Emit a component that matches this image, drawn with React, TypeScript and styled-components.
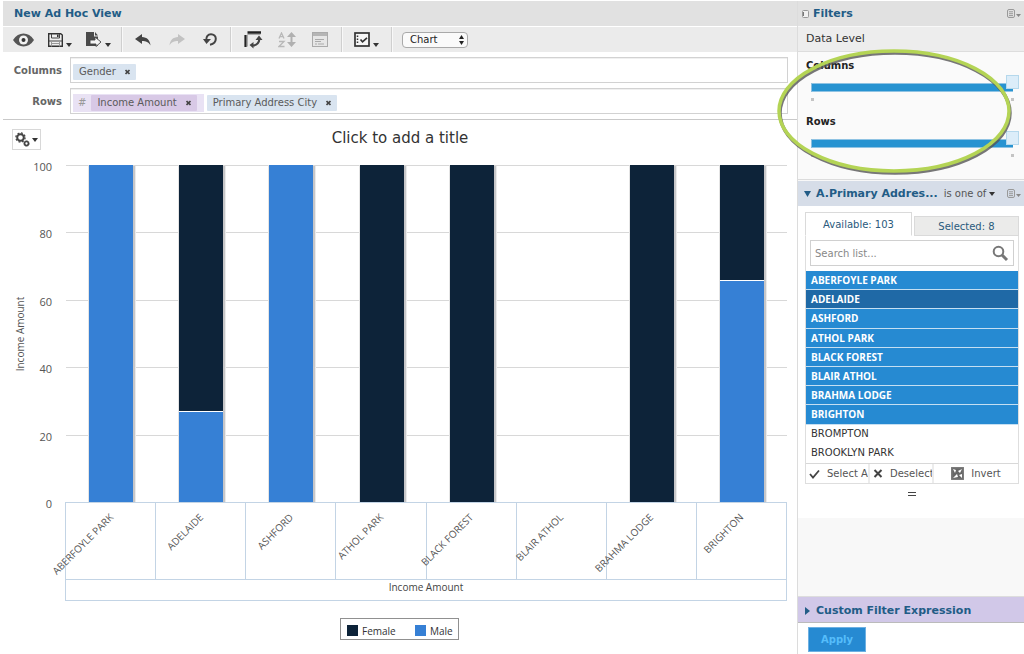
import React, { useState } from "react";
import styled, { createGlobalStyle } from "styled-components";

const Global = createGlobalStyle`
  *, *::before, *::after { box-sizing: border-box; }
  body { margin: 0; background: #fff; }
  body, button, input, select {
    font-family: "DejaVu Sans", Verdana, sans-serif;
    font-size: 11px;
    color: #444;
  }
  button { border: 0; padding: 0; background: none; cursor: pointer; }
  h1, h2, h3, ul { margin: 0; padding: 0; }
`;

const chartFont = `"Open Sans", "Lucida Grande", sans-serif`;

const Page = styled.div`
  display: grid;
  grid-template-columns: minmax(0, 1fr) 227px;
  min-height: 100vh;
  padding-top: 1px;
  overflow: hidden;
`;
const Main = styled.main`
  padding-left: 3px;
  min-width: 0;
`;
const Sidebar = styled.aside`
  position: relative;
  display: flex;
  flex-direction: column;
  border-left: 1px solid #dcdcdc;
  background: #f8f8f8;
`;
const TitleBar = styled.header<{ $inset: number }>`
  display: flex;
  align-items: center;
  gap: 4px;
  height: 25px;
  padding: 0 3px 0 ${(p) => p.$inset}px;
  background: #e1e1e1;
`;
const Heading = styled.h2`
  font-size: 11px;
  font-weight: bold;
  line-height: 14px;
  color: #225c86;
`;
const Grow = styled.span`
  flex: 1;
`;
const Toolbar = styled.div`
  display: flex;
  height: 25px;
  margin-top: 1px;
  background: #ebebeb;
`;
const ToolGroup = styled.div<{ $gap: number; $pad: number }>`
  display: flex;
  align-items: center;
  gap: ${(p) => p.$gap}px;
  padding: 0 ${(p) => p.$pad}px;
  border-right: 1px solid #cfcfcf;
  box-shadow: 1px 0 0 #f8f8f8;
  &:last-child { border: 0; box-shadow: none; }
`;
const ToolButton = styled.button`
  display: flex;
  align-items: center;
  gap: 3px;
  height: 20px;
  svg { display: block; }
`;
const SelectBox = styled.span`
  position: relative;
  display: flex;
  svg { position: absolute; right: 4px; top: 3px; pointer-events: none; }
`;
const TypeSelect = styled.select`
  appearance: none;
  width: 66px;
  height: 16px;
  padding: 0 14px 0 7px;
  border: 1px solid #a9a9a9;
  border-radius: 4px;
  background: #fafafa;
  font-size: 10px;
  line-height: 13px;
  color: #222;
`;
const Shelves = styled.section`
  display: grid;
  gap: 5px;
  padding: 5px 9px 5px 0;
  border-bottom: 1px solid #c9c9c9;
`;
const Shelf = styled.div`
  display: grid;
  grid-template-columns: 59px minmax(0, 1fr);
  align-items: center;
  gap: 8px;
`;
const ShelfLabel = styled.h3`
  padding-top: 1px;
  font-size: 10px;
  line-height: 14px;
  text-align: right;
  color: #666;
`;
const ShelfBox = styled.div`
  display: flex;
  align-items: center;
  gap: 3px;
  height: 26px;
  padding: 3px 2px 0;
  border: 1px solid #d2d2d2;
  box-shadow: inset 0 1px 0 #f0f0f0;
`;
const Token = styled.span<{ $measure?: boolean }>`
  display: flex;
  align-items: center;
  gap: 9px;
  height: 16px;
  padding: 0 6px;
  border-radius: 1px;
  background: ${(p) => (p.$measure ? "#d8c9e6" : "#d9e4f0")};
  font-size: 10px;
  line-height: 16px;
  color: #5a5a5a;
`;
const MeasureWrap = styled.span`
  display: flex;
  align-items: center;
  gap: 5px;
  height: 18px;
  padding: 0 7px 0 5px;
  background: #e9e2f4;
  font-size: 10px;
  font-style: italic;
  color: #999;
  & > span { font-style: normal; }
`;
const Remove = styled.button`
  display: flex;
  svg { display: block; }
`;
const CanvasHead = styled.div`
  display: grid;
  grid-template-columns: 60px minmax(0, 1fr) 60px;
  height: 30px;
  padding-top: 9px;
`;
const GearButton = styled.button`
  display: flex;
  align-items: center;
  justify-content: center;
  gap: 2px;
  width: 29px;
  height: 21px;
  margin-left: 9px;
  border: 1px solid #d8d8d8;
`;
const ChartTitle = styled.button`
  font-size: 15px;
  line-height: 18px;
  align-self: start;
  color: #333;
`;
const ChartSvg = styled.svg`
  display: block;
  width: 100%;
  height: auto;
  overflow: visible;
  font-family: ${chartFont};
  font-size: 10px;
  fill: #555;
`;
const ScaleText = styled.text`
  font-size: 11px;
`;
const LevelBar = styled.div`
  height: 25px;
  margin-top: 1px;
  padding-left: 8px;
  border-bottom: 1px solid #ddd;
  background: #ededed;
  font-size: 11px;
  line-height: 24px;
  color: #333;
`;
const Levels = styled.section`
  display: grid;
  align-content: start;
  height: 128px;
  padding: 7px 5px 0 8px;
  border-bottom: 1px solid #dcdcdc;
  background: #fafafa;
`;
const Level = styled.div`
  height: 56px;
`;
const LevelLabel = styled.label`
  display: block;
  font-size: 10px;
  font-weight: bold;
  line-height: 14px;
  color: #222;
`;
const Range = styled.input`
  appearance: none;
  display: block;
  width: calc(100% - 5px);
  height: 16px;
  margin: 3px 0 0 5px;
  background: transparent;
  &::-webkit-slider-runnable-track {
    height: 9px;
    margin-top: 7px;
    border-left: 1px solid #8dbedd;
    background: linear-gradient(#8fc3e3 1px, #2793d1 1px, #2793d1 8px, #8fc3e3 8px) no-repeat;
    background-size: calc(100% - 6px) 100%;
  }
  &::-webkit-slider-thumb {
    appearance: none;
    width: 13px;
    height: 14px;
    margin-top: -8px;
    border: 1px solid #b5d8ec;
    background: #dcedf9;
  }
`;
const Ticks = styled.div`
  display: flex;
  justify-content: space-between;
  margin: 6px 5px 0 5px;
  i { width: 3px; height: 3px; background: #c4c4c4; }
`;
const FilterHead = styled.header`
  display: flex;
  align-items: center;
  height: 25px;
  margin-top: 1px;
  padding: 0 3px 0 5px;
  background: #d6dde8;
`;
const Toggle = styled.button`
  display: flex;
  align-items: center;
  gap: 5px;
  color: #225c86;
  font-weight: bold;
  white-space: nowrap;
`;
const Operator = styled.button`
  display: flex;
  align-items: center;
  gap: 3px;
  margin-left: 6px;
  font-size: 10px;
  color: #555;
  white-space: nowrap;
`;
const FilterBody = styled.div`
  padding: 6px 5px 0 7px;
  height: 312px;
  background: #fff;
`;
const Tabs = styled.div`
  display: grid;
  grid-template-columns: 107px minmax(0, 1fr);
  column-gap: 2px;
  align-items: end;
`;
const Tab = styled.button<{ $active?: boolean }>`
  height: ${(p) => (p.$active ? 24 : 20)}px;
  border: 1px solid #dadada;
  border-bottom-color: ${(p) => (p.$active ? "#fff" : "#dadada")};
  background: ${(p) => (p.$active ? "#fff" : "#ebebea")};
  font-size: 10px;
  color: #2a5a7c;
`;
const ListPanel = styled.div`
  display: flow-root;
  border: 1px solid #dedede;
  border-top: 0;
`;
const Search = styled.label`
  display: flex;
  align-items: center;
  height: 26px;
  margin: 4px 4px 5px 4px;
  padding: 0 4px;
  border: 1px solid #d0d0d0;
  input {
    flex: 1;
    min-width: 0;
    padding: 0;
    border: 0;
    outline: 0;
    background: none;
    font-size: 10px;
  }
  input::placeholder { color: #888; }
`;
const Options = styled.ul`
  display: grid;
  grid-template-rows: repeat(10, 1fr);
  height: 192px;
  list-style: none;
`;
const Option = styled.li<{ $state: "on" | "focus" | "off" }>`
  display: flex;
  align-items: center;
  padding-left: 5px;
  border-bottom: 1px solid ${(p) => (p.$state === "off" ? "#fff" : "#c5dff2")};
  background: ${(p) => ({ on: "#268ad2", focus: "#1f69a6", off: "#fff" })[p.$state]};
  color: ${(p) => (p.$state === "off" ? "#333" : "#fff")};
  font-family: ${(p) => (p.$state === "off" ? "inherit" : chartFont)};
  font-size: 10px;
  font-weight: ${(p) => (p.$state === "off" ? "normal" : "bold")};
  cursor: default;
`;
const Actions = styled.div`
  display: grid;
  grid-template-columns: 64px 64px minmax(0, 1fr);
  height: 20px;
  border-top: 1px solid #d8d8d8;
`;
const Action = styled.button<{ $center?: boolean }>`
  display: flex;
  align-items: center;
  justify-content: ${(p) => (p.$center ? "center" : "flex-start")};
  gap: 7px;
  padding-left: ${(p) => (p.$center ? 0 : 3)}px;
  border-right: 2px solid #ececec;
  overflow: hidden;
  white-space: nowrap;
  font-size: 10px;
  color: #555;
  svg { flex: none; }
  &:last-child { border-right: 0; }
`;
const Grip = styled.div`
  width: 8px;
  height: 4px;
  margin: 8px auto 0;
  border: solid #444;
  border-width: 1px 0;
`;
const Expression = styled.header`
  display: flex;
  align-items: center;
  height: 27px;
  margin-top: auto;
  padding: 2px 0 0 6px;
  border-top: 1px solid #ddd;
  border-bottom: 1px solid #bbb;
  background: #d1c8e8;
`;
const Footer = styled.footer`
  height: 31px;
  padding: 4px 10px;
  background: #fff;
`;
const Apply = styled.button`
  display: block;
  width: 58px;
  height: 25px;
  border: 1px solid #6db0e2;
  background: #268ad2;
  color: #55bdfb;
  font-size: 10px;
  font-weight: bold;
`;
const Highlight = styled.svg`
  position: absolute;
  left: -22px;
  top: 46px;
  pointer-events: none;
`;

const Caret = ({ low }: { low?: boolean }) => (
  <svg width="6" height={low ? 14 : 4} aria-hidden="true">
    <path d={low ? "M0 10h6l-3 4z" : "M0 0h6l-3 4z"} fill="#333" />
  </svg>
);
const Cross = () => (
  <svg width="5" height="6" viewBox="0 0 5 6" aria-hidden="true">
    <path d="M.5 1l4 4M4.5 1l-4 4" stroke="#444" strokeWidth="1.7" />
  </svg>
);
const MenuIcon = () => (
  <svg width="14" height="10" viewBox="0 0 14 10" aria-hidden="true">
    <rect x=".5" y=".5" width="7" height="8" rx="1.5" fill="none" stroke="#999" />
    <path d="M2 2.8h4M2 4.7h4M2 6.6h4" stroke="#999" />
    <path d="M9 5h5l-2.500 3z" fill="#888" />
  </svg>
);
const EyeIcon = () => (
  <svg width="21" height="14" viewBox="0 0 21 14">
    <path d="M0 7C3 2.500 6.500 .5 10.500 .5S18 2.500 21 7c-3 4.500-6.500 6.500-10.500 6.500S3 11.500 0 7z" fill="#555" />
    <circle cx="10.500" cy="7" r="4.500" fill="#f2f2f2" />
    <circle cx="10.500" cy="7" r="2" fill="#333" />
  </svg>
);
const SaveIcon = () => (
  <svg width="15" height="14" viewBox="0 0 15 14">
    <path d="M.7.7h12L14.300 2v11.300H.7z" fill="#eee" stroke="#333" strokeWidth="1.400" />
    <path d="M3.500 1v4h8V1" fill="none" stroke="#444" />
    <path d="M9 1.500h1.600v2.600H9z" fill="#333" />
    <path d="M1 8h13" stroke="#444" />
    <path d="M3.500 8.500v5M11.500 8.500v5M4 10.500h7" stroke="#999" />
  </svg>
);
const ExportIcon = () => (
  <svg width="16" height="15" viewBox="0 0 16 15">
    <path d="M0 0h8v4.500h4V14H0z" fill="#4a4a4a" />
    <path d="M9 0l3 3.500H9z" fill="#4a4a4a" />
    <path d="M4 8h5V5l6 5-5 4.500V12H4z" fill="#f5f5f5" stroke="#444" strokeWidth=".9" />
  </svg>
);
const ArrowIcon = ({ flip }: { flip?: boolean }) => (
  <svg width="16" height="12" viewBox="0 0 16 12">
    <path
      d="M7 0L0 5l7 5V7c4 0 6.500 1 8.500 4.500C15 6 12 3.200 7 3z"
      fill={flip ? "#c2c2c2" : "#444"}
      transform={flip ? "translate(16 0) scale(-1 1)" : undefined}
    />
  </svg>
);
const ResetIcon = () => (
  <svg width="14" height="13" viewBox="0 0 14 13">
    <path d="M3.300 7C3 3.500 5 1.200 8 1.200c2.800 0 4.800 2 4.800 4.600 0 3-2.300 5.200-5.800 5.900" fill="none" stroke="#444" strokeWidth="2" />
    <path d="M0 6h8l-4.500 5z" fill="#444" />
  </svg>
);
const PivotIcon = () => (
  <svg width="19" height="18" viewBox="0 0 19 18">
    <path d="M3.500 1.500H17" stroke="#222" strokeWidth="2.500" />
    <path d="M1.500 4v12" stroke="#222" strokeWidth="2.200" />
    <path d="M3.500 3.500h13M3.500 3.500v12" stroke="#aaa" fill="none" />
    <path d="M8.500 14.500c4.500 0 6.500-2.500 7-7" fill="none" stroke="#444" strokeWidth="2.200" />
    <path d="M11.500 9L15 4.500 18.500 9zM9.500 11v6.500L5.500 14z" fill="#444" />
  </svg>
);
const SortIcon = () => (
  <svg width="19" height="16" viewBox="0 0 19 16">
    <path d="M1 6.500L3.500 1 6 6.500M2 4.700h3M1 9.500h5l-5 5h5.500" fill="none" stroke="#b8b8b8" strokeWidth="1.300" />
    <path d="M13.500 3v9" stroke="#b0b0b0" strokeWidth="2" />
    <path d="M9 5l4.500-5L18 5zM9 10h9l-4.500 5z" fill="#b0b0b0" />
  </svg>
);
const FormIcon = () => (
  <svg width="16" height="15" viewBox="0 0 16 15">
    <rect x=".5" y=".5" width="15" height="14" fill="#e6e6e6" stroke="#aaa" />
    <path d="M1 2.500h14" stroke="#b5b5b5" strokeWidth="3" />
    <path d="M3 7.500h9M3 9.500h6M3 12h2M6 12h6" stroke="#aaa" />
  </svg>
);
const OptionsIcon = () => (
  <svg width="16" height="15" viewBox="0 0 16 15">
    <rect x="1" y="1" width="14" height="13" fill="#f6f6f6" stroke="#333" strokeWidth="1.700" />
    <path d="M3.500 3.500v8" stroke="#333" strokeWidth="1.500" strokeDasharray="1.500 1.500" />
    <path d="M6.500 7.500l2 2.300 4.500-4" fill="none" stroke="#333" strokeWidth="1.700" />
  </svg>
);
const GearsIcon = () => (
  <svg width="15" height="15" viewBox="0 0 15 15">
    <circle cx="5.500" cy="5.500" r="3.300" fill="none" stroke="#444" strokeWidth="2" />
    <circle cx="5.500" cy="5.500" r="4.600" fill="none" stroke="#444" strokeWidth="1.300" strokeDasharray="1.900 1.700" />
    <circle cx="11.500" cy="11.500" r="1.900" fill="none" stroke="#444" strokeWidth="1.500" />
    <circle cx="11.500" cy="11.500" r="2.900" fill="none" stroke="#444" strokeWidth=".8" strokeDasharray="1.200 1" />
  </svg>
);

const NAVY = "#0d2339";
const BLUE = "#3680d5";
const TOP = 165;
const BASE = 502;
const LEFT = 65;
const STEP = 90;

const cities: { name: string; male: number; female: number }[] = [
  { name: "ABERFOYLE PARK", male: 100, female: 0 },
  { name: "ADELAIDE", male: 27, female: 73 },
  { name: "ASHFORD", male: 100, female: 0 },
  { name: "ATHOL PARK", male: 0, female: 100 },
  { name: "BLACK FOREST", male: 0, female: 100 },
  { name: "BLAIR ATHOL", male: 0, female: 0 },
  { name: "BRAHMA LODGE", male: 0, female: 100 },
  { name: "BRIGHTON", male: 66, female: 34 },
];

const scaleY = (v: number) => Math.round(BASE - ((BASE - TOP) * v) / 100);

function StackedChart() {
  return (
    <ChartSvg viewBox="3 150 794 503" role="img" aria-label="Income Amount by city and gender">
      {[0, 20, 40, 60, 80, 100].map((v) => (
        <g key={v}>
          {v > 0 && <path d={`M66 ${scaleY(v) + 0.5}H787`} stroke="#d8d8d8" />}
          <ScaleText x="52" y={scaleY(v) + 6} textAnchor="end">{v}</ScaleText>
        </g>
      ))}
      {cities.map((c, i) => {
        const x = LEFT + 24 + i * STEP + (i > 2 ? 1 : 0);
        const mid = scaleY(c.male);
        return (
          <g key={c.name}>
            {c.male + c.female > 0 && (
              <>
                <rect x={x - 1} y={TOP} width="1" height={BASE - TOP} fill="#e4e4e4" />
                <rect x={x + 44} y={TOP + 1} width="2" height={BASE - TOP - 1} fill="#c6c6c8" />
                <rect x={x + 46} y={TOP + 1} width="1" height={BASE - TOP - 1} fill="#ebebeb" />
              </>
            )}
            {c.female > 0 && <rect x={x} y={TOP} width="44" height={mid - TOP} fill={NAVY} />}
            {c.male > 0 && <rect x={x} y={mid} width="44" height={BASE - mid} fill={BLUE} />}
            {c.female > 0 && c.male > 0 && <rect x={x} y={mid} width="44" height="1" fill="#fff" />}
          </g>
        );
      })}
      <g fill="none" stroke="#c3d4e5">
        <path d="M65 502.500H787M65 579.500H787M65 600.500H787M65.500 502V601M786.500 502V601" />
        {[155, 245, 335, 426, 516, 606, 696].map((x) => (
          <path key={x} d={`M${x + 0.5} 503V579`} />
        ))}
      </g>
      {cities.map((c, i) => (
        <text
          key={c.name}
          textAnchor="end"
          transform={`translate(${LEFT + 49 + i * STEP} 518) rotate(-45)`}
        >
          {c.name}
        </text>
      ))}
      <text x="426" y="591" textAnchor="middle" fill="#444">Income Amount</text>
      <text transform="translate(24 334) rotate(-90)" textAnchor="middle">Income Amount</text>
      <rect x="340.500" y="618.500" width="118" height="21" fill="#fff" stroke="#909090" />
      <rect x="347" y="625" width="11" height="11" fill={NAVY} />
      <text x="362" y="635" fill="#333">Female</text>
      <rect x="415" y="625" width="11" height="11" fill={BLUE} />
      <text x="430" y="635" fill="#333">Male</text>
    </ChartSvg>
  );
}

const listItems = [
  "ABERFOYLE PARK", "ADELAIDE", "ASHFORD", "ATHOL PARK", "BLACK FOREST",
  "BLAIR ATHOL", "BRAHMA LODGE", "BRIGHTON", "BROMPTON", "BROOKLYN PARK",
];

export default function App() {
  const [levels, setLevels] = useState({ Columns: 1, Rows: 1 });
  return (
    <>
      <Global />
      <Page>
        <Main>
          <TitleBar $inset={11}>
            <Heading as="h1">New Ad Hoc View</Heading>
          </TitleBar>
          <Toolbar>
            <ToolGroup $gap={14} $pad={10}>
              <ToolButton aria-label="Display mode"><EyeIcon /></ToolButton>
              <ToolButton aria-label="Save"><SaveIcon /><Caret low /></ToolButton>
              <ToolButton aria-label="Export"><ExportIcon /><Caret low /></ToolButton>
            </ToolGroup>
            <ToolGroup $gap={18} $pad={13}>
              <ToolButton aria-label="Undo"><ArrowIcon /></ToolButton>
              <ToolButton aria-label="Redo"><ArrowIcon flip /></ToolButton>
              <ToolButton aria-label="Undo all"><ResetIcon /></ToolButton>
            </ToolGroup>
            <ToolGroup $gap={15} $pad={13}>
              <ToolButton aria-label="Switch group"><PivotIcon /></ToolButton>
              <ToolButton aria-label="Sort"><SortIcon /></ToolButton>
              <ToolButton aria-label="Input controls"><FormIcon /></ToolButton>
            </ToolGroup>
            <ToolGroup $gap={0} $pad={12}>
              <ToolButton aria-label="Page options"><OptionsIcon /><Caret low /></ToolButton>
            </ToolGroup>
            <ToolGroup $gap={0} $pad={10}>
              <SelectBox>
                <TypeSelect aria-label="Visualization type" defaultValue="Chart">
                  <option>Table</option>
                  <option>Chart</option>
                  <option>Crosstab</option>
                </TypeSelect>
                <svg width="5" height="10" viewBox="0 0 5 10" aria-hidden="true">
                  <path d="M0 4l2.500-4L5 4zM0 6h5l-2.500 4z" fill="#222" />
                </svg>
              </SelectBox>
            </ToolGroup>
          </Toolbar>
          <Shelves>
            <Shelf>
              <ShelfLabel>Columns</ShelfLabel>
              <ShelfBox>
                <Token>Gender<Remove aria-label="Remove Gender"><Cross /></Remove></Token>
              </ShelfBox>
            </Shelf>
            <Shelf>
              <ShelfLabel>Rows</ShelfLabel>
              <ShelfBox>
                <MeasureWrap>
                  #
                  <Token $measure>Income Amount<Remove aria-label="Remove Income Amount"><Cross /></Remove></Token>
                </MeasureWrap>
                <Token>Primary Address City<Remove aria-label="Remove Primary Address City"><Cross /></Remove></Token>
              </ShelfBox>
            </Shelf>
          </Shelves>
          <CanvasHead>
            <GearButton aria-label="Chart options"><GearsIcon /><Caret /></GearButton>
            <ChartTitle>Click to add a title</ChartTitle>
          </CanvasHead>
          <StackedChart />
        </Main>
        <Sidebar>
          <TitleBar $inset={4}>
            <svg width="7" height="8" viewBox="0 0 7 8" aria-hidden="true">
              <rect x=".5" y=".5" width="6" height="7" rx="1" fill="#f0f0f0" stroke="#999" />
              <path d="M1.500 2v4" stroke="#777" />
            </svg>
            <Heading>Filters</Heading>
            <Grow />
            <ToolButton aria-label="Filters menu"><MenuIcon /></ToolButton>
          </TitleBar>
          <LevelBar>Data Level</LevelBar>
          <Levels>
            {(["Columns", "Rows"] as const).map((name) => (
              <Level key={name}>
                <LevelLabel htmlFor={`level-${name}`}>{name}</LevelLabel>
                <Range
                  id={`level-${name}`}
                  type="range"
                  min={0}
                  max={1}
                  value={levels[name]}
                  onChange={(e) => setLevels({ ...levels, [name]: Number(e.target.value) })}
                />
                <Ticks><i /><i /></Ticks>
              </Level>
            ))}
          </Levels>
          <FilterHead>
            <Toggle>
              <svg width="8" height="6" aria-hidden="true"><path d="M1 0h7L4.500 6z" fill="#225c86" /></svg>
              A.Primary Addres...
            </Toggle>
            <Operator>is one of<Caret /></Operator>
            <Grow />
            <ToolButton aria-label="Filter menu"><MenuIcon /></ToolButton>
          </FilterHead>
          <FilterBody>
            <Tabs role="tablist">
              <Tab $active role="tab" aria-selected="true">Available: 103</Tab>
              <Tab role="tab" aria-selected="false">Selected: 8</Tab>
            </Tabs>
            <ListPanel>
              <Search>
                <input type="text" placeholder="Search list..." aria-label="Search list" />
                <svg width="17" height="17" viewBox="0 0 17 17" aria-hidden="true">
                  <circle cx="6.500" cy="6.500" r="4.800" fill="none" stroke="#777" strokeWidth="2" />
                  <path d="M10 10l5 5" stroke="#777" strokeWidth="3" />
                </svg>
              </Search>
              <Options role="listbox" aria-label="Available values" aria-multiselectable="true">
                {listItems.map((item, i) => (
                  <Option key={item} role="option" aria-selected={i < 8} $state={i === 1 ? "focus" : i < 8 ? "on" : "off"}>
                    {item}
                  </Option>
                ))}
              </Options>
              <Actions>
                <Action>
                  <svg width="11" height="10"><path d="M1 5l3 3.500L10 1.500" fill="none" stroke="#444" strokeWidth="1.800" /></svg>
                  Select All
                </Action>
                <Action>
                  <svg width="10" height="9"><path d="M1.500 1l7 7M8.500 1l-7 7" stroke="#444" strokeWidth="2" /></svg>
                  Deselect All
                </Action>
                <Action $center>
                  <svg width="13" height="13" viewBox="0 0 13 13">
                    <rect x=".8" y=".8" width="11.400" height="11.400" fill="#666" stroke="#777" strokeWidth="1.500" />
                    <path d="M2 2l3 1-1 3zM11 2L7 4l2 2zM2 11l4-4 1 3zM11 11L8 8l3-1z" fill="#fff" />
                  </svg>
                  Invert
                </Action>
              </Actions>
            </ListPanel>
            <Grip />
          </FilterBody>
          <Expression>
            <Toggle>
              <svg width="7" height="8" aria-hidden="true"><path d="M1 0l5 4-5 4z" fill="#225c86" /></svg>
              Custom Filter Expression
            </Toggle>
          </Expression>
          <Footer>
            <Apply>Apply</Apply>
          </Footer>
          <Highlight width="240" height="132" viewBox="0 0 240 132" aria-hidden="true">
            <defs>
              <filter id="soften"><feGaussianBlur stdDeviation="0.7" /></filter>
            </defs>
            <ellipse cx="119" cy="66" rx="115" ry="60" fill="none" stroke="#555" strokeOpacity=".8" strokeWidth="3.500" filter="url(#soften)" />
            <ellipse cx="118" cy="64" rx="115" ry="60" fill="none" stroke="#b4d455" strokeWidth="3.500" />
          </Highlight>
        </Sidebar>
      </Page>
    </>
  );
}
